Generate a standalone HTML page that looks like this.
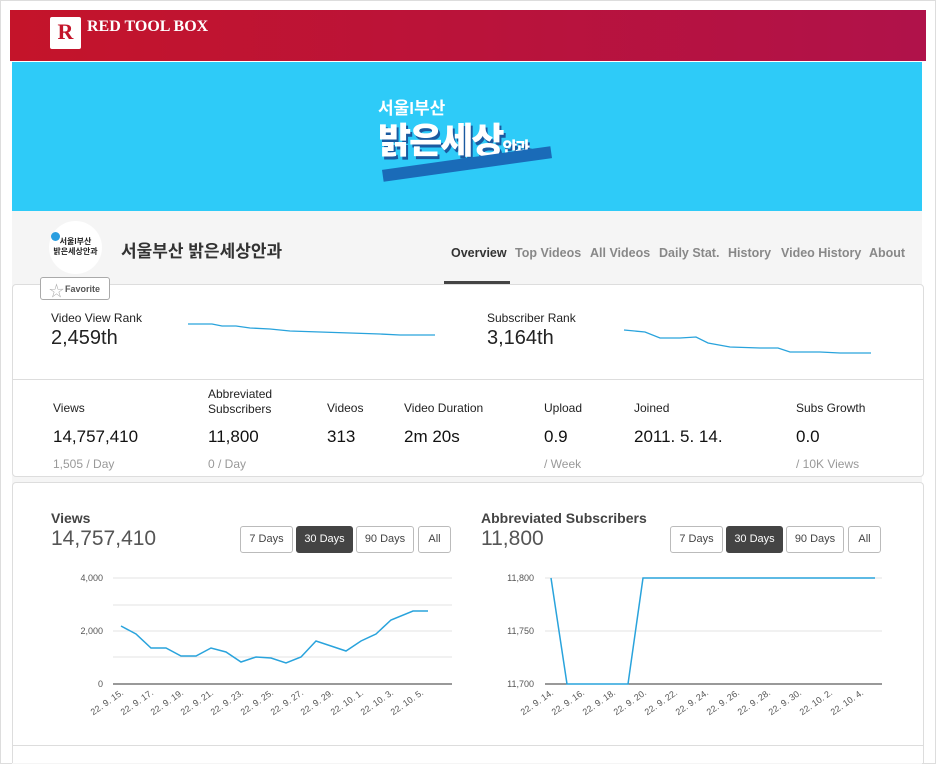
<!DOCTYPE html><html><head><meta charset="utf-8"><style>
body{margin:0;width:936px;height:764px;background:#fff;font-family:"Liberation Sans","Noto Sans CJK KR",sans-serif;position:relative;overflow:hidden;color:#222}
.a{position:absolute}
.frame{left:0;top:0;width:934px;height:762px;border:1px solid #ddd}
.hdr{left:10px;top:10px;width:916px;height:51px;background:linear-gradient(90deg,#c4142a,#b0124a)}
.ban{left:12px;top:62px;width:910px;height:149px;background:#2ecbf8}
.prof{left:12px;top:211px;width:910px;height:553px;background:#f5f5f5}
.card{background:#fff;border:1px solid #ddd;border-radius:4px}
.tab{top:246px;font-size:12.5px;color:#888;font-weight:bold}
.lbl{font-size:12px;color:#222}
.val{font-size:17px;color:#111}
.sub{font-size:12px;color:#999}
.btn{top:526px;height:25px;border:1px solid #bbb;border-radius:3px;font-size:11px;color:#444;text-align:center;line-height:25px;background:#fff}
.btn.on{background:#444;color:#fff;border-color:#444}
svg text{font-family:"Liberation Sans",sans-serif;font-size:9px;fill:#555}
</style></head><body>
<div class="a frame"></div>
<div class="a hdr"></div>
<div class="a" style="left:50px;top:17px;width:31px;height:32px;background:#fff;border-radius:2px;color:#c4142a;font:bold 22px 'Liberation Serif',serif;text-align:center;line-height:30px">R</div>
<div class="a" style="left:87px;top:18px;color:#fff;font:bold 16px 'Liberation Serif',serif">RED TOOL BOX</div>
<div class="a ban"></div>
<div class="a" style="left:378px;top:92px;width:180px;height:90px">
<div class="a" style="left:0;top:2px;color:#fff;font-weight:bold;font-size:17px">서울l부산</div>
<div class="a" style="left:0;top:20px;color:#fff;font-weight:900;font-size:36px;text-shadow:2px 3px 0 #1a5aa0;letter-spacing:-2px">밝은세상<span style="font-size:16px">안과</span></div>
<div class="a" style="left:4px;top:66px;width:170px;height:12px;background:#1a6bb8;transform:rotate(-8deg)"></div>
</div>
<div class="a prof"></div>
<div class="a" style="left:49px;top:221px;width:53px;height:53px;border-radius:50%;background:#fff;font-size:8px;font-weight:bold;line-height:10px;text-align:center;padding-top:16px;box-sizing:border-box">서울l부산<br>밝은세상안과</div>
<div class="a" style="left:51px;top:232px;width:9px;height:9px;border-radius:50%;background:#2a9ee0"></div>
<div class="a" style="left:121px;top:237px;font-size:17px;color:#333;font-weight:bold">서울부산 밝은세상안과</div>
<div class="a tab" style="left:451px;color:#333">Overview</div>
<div class="a tab" style="left:515px">Top Videos</div>
<div class="a tab" style="left:590px">All Videos</div>
<div class="a tab" style="left:659px">Daily Stat.</div>
<div class="a tab" style="left:728px">History</div>
<div class="a tab" style="left:781px">Video History</div>
<div class="a tab" style="left:869px">About</div>
<div class="a" style="left:444px;top:281px;width:66px;height:3px;background:#444"></div>
<div class="a card" style="left:12px;top:284px;width:910px;height:191px"></div>
<div class="a" style="left:12px;top:379px;width:912px;height:1px;background:#ddd"></div>
<div class="a" style="left:40px;top:277px;width:70px;height:23px;border:1px solid #aaa;border-radius:3px;background:#fff;font-size:9px;font-weight:bold;color:#555;line-height:23px;box-sizing:border-box;padding-left:24px">Favorite</div>
<div class="a" style="left:49px;top:280px;color:#aaa;font-size:15px">☆</div>
<div class="a lbl" style="left:51px;top:311px">Video View Rank</div>
<div class="a" style="left:51px;top:327px;font-size:20px">2,459th</div>
<div class="a lbl" style="left:487px;top:311px">Subscriber Rank</div>
<div class="a" style="left:487px;top:327px;font-size:20px">3,164th</div>
<svg class="a" style="left:0;top:0" width="936" height="764">
<polyline fill="none" stroke="#29a3dc" stroke-width="1.3" points="188,324 212,324 222,326 236,326 250,328 270,329 290,331 320,332 350,333 380,334 400,335 435,335"/>
<polyline fill="none" stroke="#29a3dc" stroke-width="1.3" points="624,330 645,332 660,338 680,338 696,337 708,343 730,347 760,348 778,348 790,352 820,352 840,353 871,353"/>
</svg>
<div class="a lbl" style="left:53px;top:401px">Views</div>
<div class="a val" style="left:53px;top:427px">14,757,410</div>
<div class="a sub" style="left:53px;top:457px">1,505 / Day</div>
<div class="a lbl" style="left:208px;top:387px;line-height:15px">Abbreviated<br>Subscribers</div>
<div class="a val" style="left:208px;top:427px">11,800</div>
<div class="a sub" style="left:208px;top:457px">0 / Day</div>
<div class="a lbl" style="left:327px;top:401px">Videos</div>
<div class="a val" style="left:327px;top:427px">313</div>
<div class="a lbl" style="left:404px;top:401px">Video Duration</div>
<div class="a val" style="left:404px;top:427px">2m 20s</div>
<div class="a lbl" style="left:544px;top:401px">Upload</div>
<div class="a val" style="left:544px;top:427px">0.9</div>
<div class="a sub" style="left:544px;top:457px">/ Week</div>
<div class="a lbl" style="left:634px;top:401px">Joined</div>
<div class="a val" style="left:634px;top:427px">2011. 5. 14.</div>
<div class="a lbl" style="left:796px;top:401px">Subs Growth</div>
<div class="a val" style="left:796px;top:427px">0.0</div>
<div class="a sub" style="left:796px;top:457px">/ 10K Views</div>
<div class="a card" style="left:12px;top:482px;width:910px;height:280px;border-bottom:none;border-radius:4px 4px 0 0"></div>
<div class="a" style="left:13px;top:745px;width:910px;height:1px;background:#ddd"></div>
<div class="a" style="left:51px;top:510px;font-size:14px;font-weight:bold;color:#444">Views</div>
<div class="a" style="left:51px;top:527px;font-size:21px;color:#555">14,757,410</div>
<div class="a" style="left:481px;top:510px;font-size:14px;font-weight:bold;color:#444">Abbreviated Subscribers</div>
<div class="a" style="left:481px;top:527px;font-size:21px;color:#555">11,800</div>
<div class="a btn" style="left:240px;width:51px">7 Days</div>
<div class="a btn on" style="left:296px;width:55px">30 Days</div>
<div class="a btn" style="left:356px;width:56px">90 Days</div>
<div class="a btn" style="left:418px;width:31px">All</div>
<div class="a btn" style="left:670px;width:51px">7 Days</div>
<div class="a btn on" style="left:726px;width:55px">30 Days</div>
<div class="a btn" style="left:786px;width:56px">90 Days</div>
<div class="a btn" style="left:848px;width:31px">All</div>
<svg class="a" style="left:0;top:0" width="936" height="764">
<g stroke="#e3e3e3"><line x1="113" x2="452" y1="578" y2="578"/><line x1="113" x2="452" y1="605" y2="605"/><line x1="113" x2="452" y1="631" y2="631"/><line x1="113" x2="452" y1="657" y2="657"/>
<line x1="545" x2="882" y1="578" y2="578"/><line x1="545" x2="882" y1="631" y2="631"/></g>
<line x1="113" x2="452" y1="684" y2="684" stroke="#333"/><line x1="545" x2="882" y1="684" y2="684" stroke="#333"/>
<text x="103" y="581" text-anchor="end">4,000</text><text x="103" y="634" text-anchor="end">2,000</text><text x="103" y="687" text-anchor="end">0</text>
<text x="534" y="581" text-anchor="end">11,800</text><text x="534" y="634" text-anchor="end">11,750</text><text x="534" y="687" text-anchor="end">11,700</text>
<polyline fill="none" stroke="#29a3dc" stroke-width="1.5" points="121,626 136,634 151,648 166,648 181,656 196,656 211,648 226,652 241,662 256,657 271,658 286,663 301,657 316,641 331,646 346,651 361,641 376,634 391,620 413,611 428,611"/>
<polyline fill="none" stroke="#29a3dc" stroke-width="1.5" points="551,578 567,684 628,684 643,578 875,578"/>
<text transform="translate(124,694) rotate(-35)" text-anchor="end">22. 9. 15.</text>
<text transform="translate(154,694) rotate(-35)" text-anchor="end">22. 9. 17.</text>
<text transform="translate(184,694) rotate(-35)" text-anchor="end">22. 9. 19.</text>
<text transform="translate(214,694) rotate(-35)" text-anchor="end">22. 9. 21.</text>
<text transform="translate(244,694) rotate(-35)" text-anchor="end">22. 9. 23.</text>
<text transform="translate(274,694) rotate(-35)" text-anchor="end">22. 9. 25.</text>
<text transform="translate(304,694) rotate(-35)" text-anchor="end">22. 9. 27.</text>
<text transform="translate(334,694) rotate(-35)" text-anchor="end">22. 9. 29.</text>
<text transform="translate(364,694) rotate(-35)" text-anchor="end">22. 10. 1.</text>
<text transform="translate(394,694) rotate(-35)" text-anchor="end">22. 10. 3.</text>
<text transform="translate(424,694) rotate(-35)" text-anchor="end">22. 10. 5.</text>
<text transform="translate(554,694) rotate(-35)" text-anchor="end">22. 9. 14.</text>
<text transform="translate(585,694) rotate(-35)" text-anchor="end">22. 9. 16.</text>
<text transform="translate(616,694) rotate(-35)" text-anchor="end">22. 9. 18.</text>
<text transform="translate(647,694) rotate(-35)" text-anchor="end">22. 9. 20.</text>
<text transform="translate(678,694) rotate(-35)" text-anchor="end">22. 9. 22.</text>
<text transform="translate(709,694) rotate(-35)" text-anchor="end">22. 9. 24.</text>
<text transform="translate(740,694) rotate(-35)" text-anchor="end">22. 9. 26.</text>
<text transform="translate(771,694) rotate(-35)" text-anchor="end">22. 9. 28.</text>
<text transform="translate(802,694) rotate(-35)" text-anchor="end">22. 9. 30.</text>
<text transform="translate(833,694) rotate(-35)" text-anchor="end">22. 10. 2.</text>
<text transform="translate(864,694) rotate(-35)" text-anchor="end">22. 10. 4.</text>
</svg>
</body></html>
